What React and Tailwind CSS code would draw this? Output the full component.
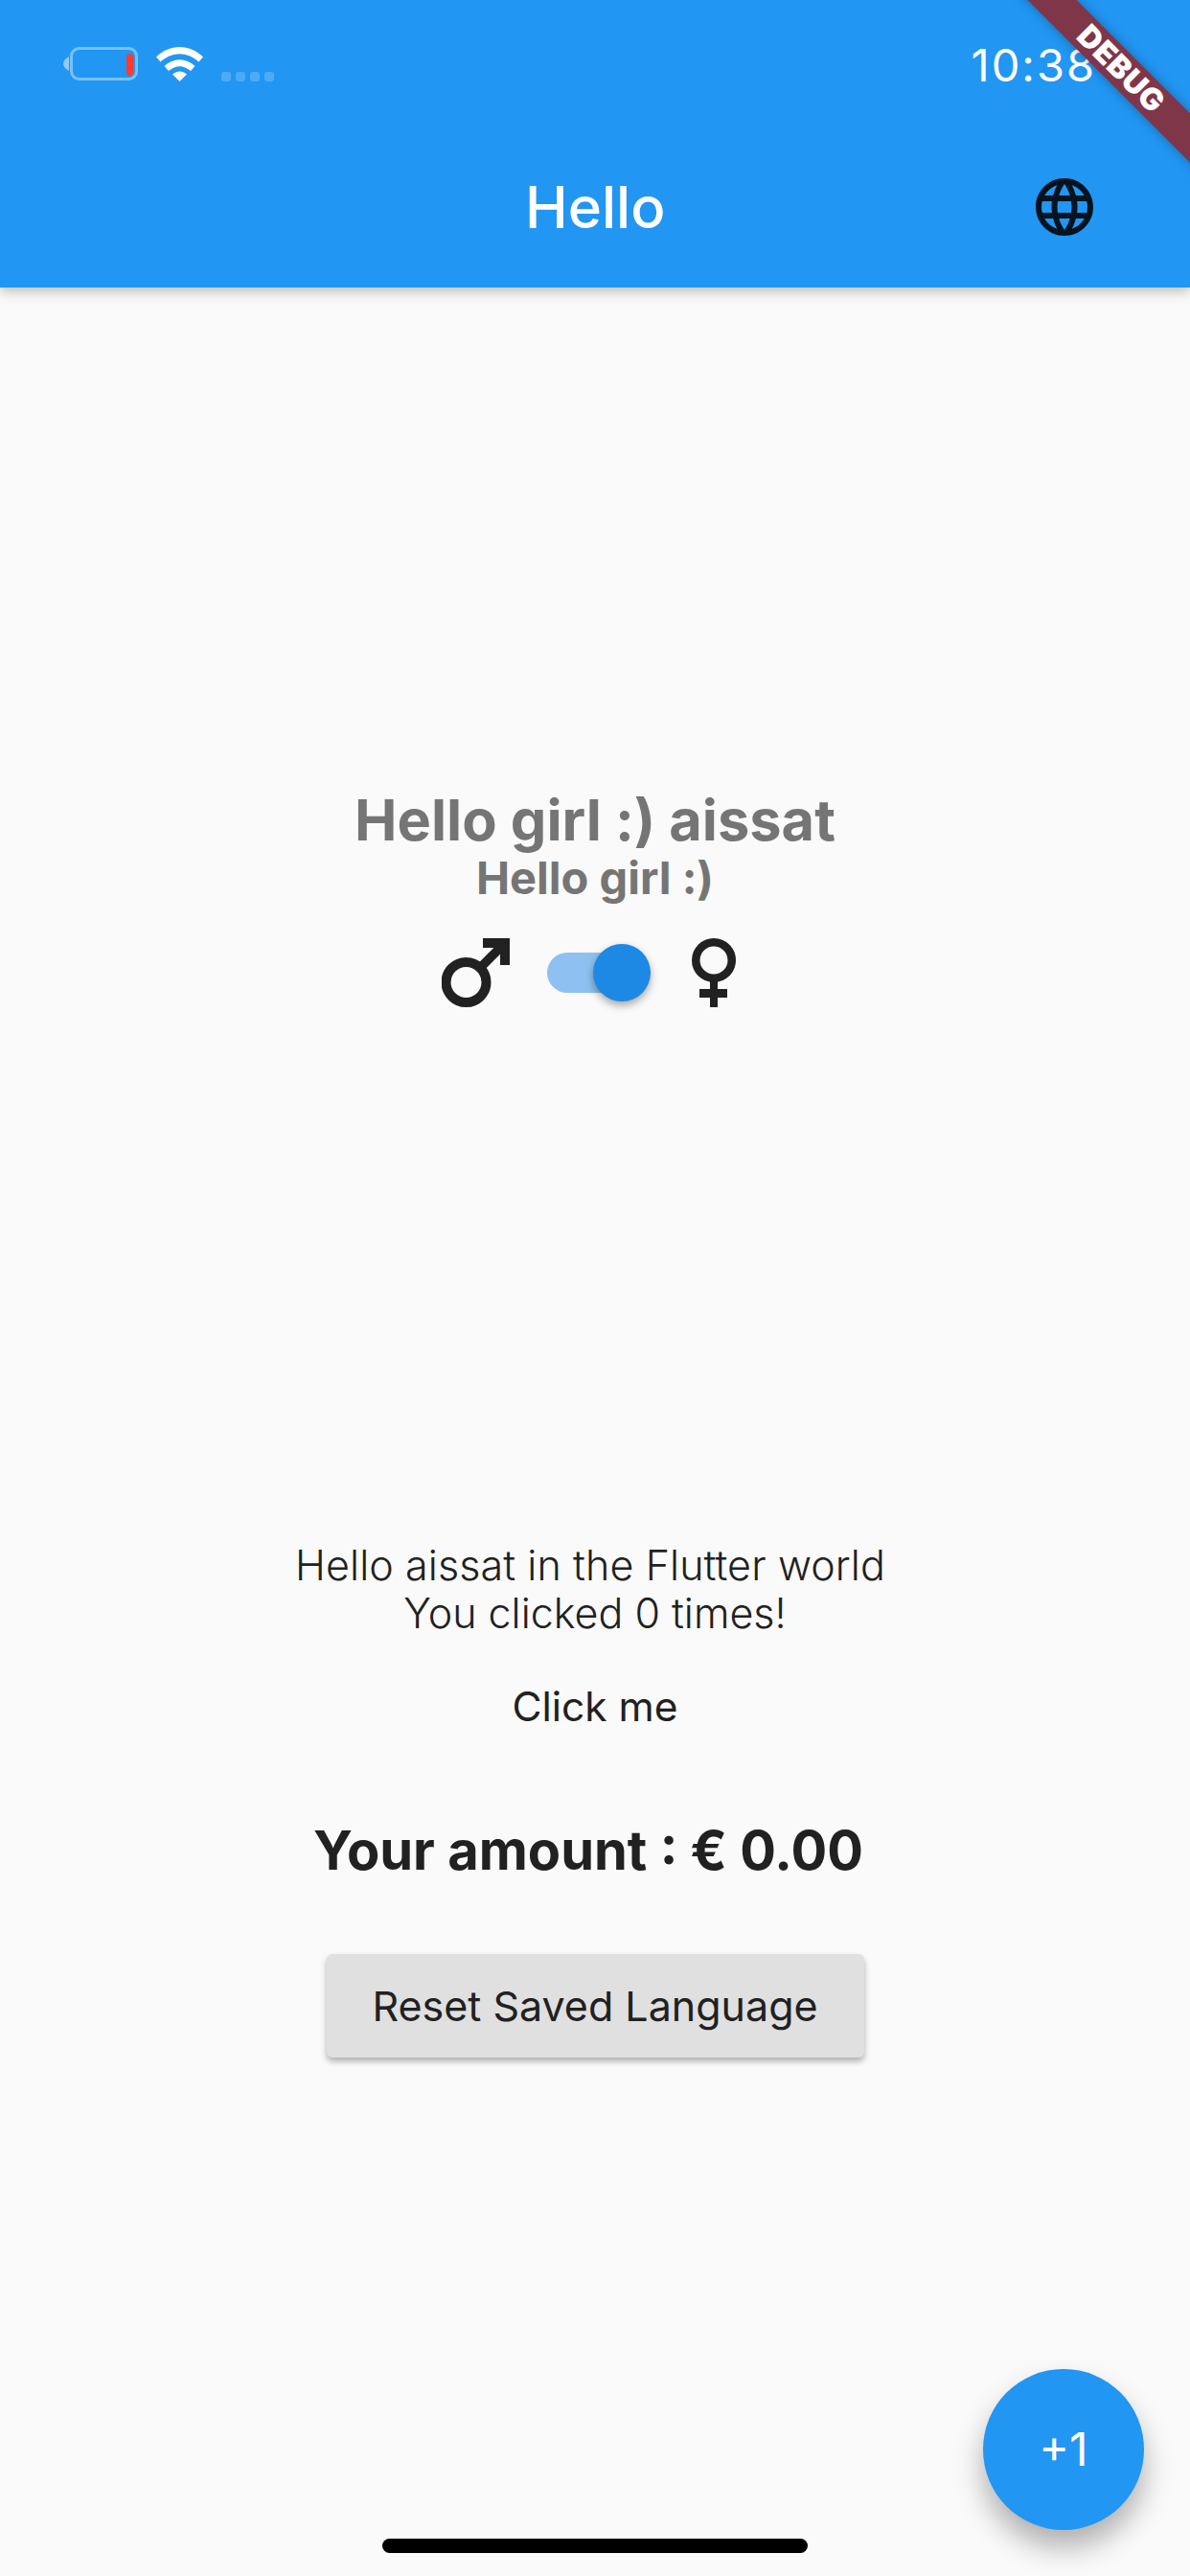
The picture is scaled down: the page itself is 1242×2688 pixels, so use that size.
import { MdLanguage } from 'react-icons/md'

function StatusIcons() {
  return (
    <div className="flex items-start">
      {/* Battery */}
      <svg width="82" height="40" viewBox="0 0 82 40" className="ml-[64px]">
        <path d="M8 11 C4 13 2 16 2 18.5 C2 21 4 24 8 26 Z" fill="#ffffff" fillOpacity="0.5" />
        <rect x="10.5" y="2.5" width="68" height="32" rx="8" fill="none" stroke="#ffffff" strokeOpacity="0.4" strokeWidth="3" />
        <rect x="68" y="8" width="7" height="23" rx="3.5" fill="#ff3b30" />
      </svg>
      {/* Wifi */}
      <svg width="50" height="38" viewBox="0 0 50 38" className="ml-[17px] mt-[1px]">
        <path d="M0 10.5 C14 -3.5 35 -3.5 49 10.5 L44.5 15.5 C32 4.5 17 4.5 4.5 15.5 Z" fill="#ffffff" />
        <path d="M8.5 20 C18 11 31 11 40.5 20 L36 25 C28 18.5 21 18.5 13 25 Z" fill="#ffffff" />
        <path d="M17 28.5 C22 24.5 27 24.5 32 28.5 L24.5 36 Z" fill="#ffffff" />
      </svg>
      <div className="ml-[18px] mt-[27px] flex gap-[5px]">
        <div className="w-[10px] h-[10px] rounded-[3px] bg-white/20"></div>
        <div className="w-[10px] h-[10px] rounded-[3px] bg-white/20"></div>
        <div className="w-[10px] h-[10px] rounded-[3px] bg-white/20"></div>
        <div className="w-[10px] h-[10px] rounded-[3px] bg-white/20"></div>
      </div>
    </div>
  )
}

function MaleIcon() {
  return (
    <svg width="71" height="72" viewBox="0 0 71 72">
      <circle cx="25.5" cy="46" r="21" fill="none" stroke="#212121" strokeWidth="10" />
      <path d="M38 33 L65 6" fill="none" stroke="#212121" strokeWidth="9.5" />
      <path d="M43 0 H71 V28 H61 V10 H43 Z" fill="#212121" />
    </svg>
  )
}

function FemaleIcon() {
  return (
    <svg width="46" height="72" viewBox="0 0 46 72">
      <circle cx="23" cy="23" r="18.75" fill="none" stroke="#212121" strokeWidth="8.5" />
      <rect x="19" y="44" width="8" height="28" fill="#212121" />
      <rect x="8" y="53" width="29" height="9" fill="#212121" />
    </svg>
  )
}

export default function App() {
  return (
    <div className="relative w-[1242px] h-[2688px] overflow-hidden bg-[#fafafa] font-['Inter',sans-serif] text-[#212121]">
      {/* App bar */}
      <header className="h-[300px] bg-[#2196f3] shadow-[0_4px_12px_rgba(0,0,0,0.25)]">
        <div className="flex justify-between items-start pt-[48px] pr-[98px] h-[168px]">
          <StatusIcons />
          <span className="text-[47px] leading-[40px] tracking-[2px] text-white">10:38</span>
        </div>
        <div className="flex items-center justify-between h-[96px] pl-[548px] pr-[95px]">
          <h1 className="text-[60px] leading-[60px] font-medium text-white">Hello</h1>
          <MdLanguage className="w-[72px] h-[72px] text-[#04141f]" />
        </div>
      </header>

      {/* Main */}
      <main className="flex flex-col items-center">
        <p className="mt-[523px] text-[59.5px] leading-[64px] font-bold text-[#757575]">Hello girl :) aissat</p>
        <p className="text-[47px] leading-[58px] font-bold text-[#757575]">Hello girl :)</p>
        <div className="mt-[34px] mr-[13px] flex items-center h-[72px]">
          <MaleIcon />
          <div className="relative ml-[39px] w-[99px] h-[42px] rounded-full bg-[#8ec1f1]">
            <div className="absolute right-[-9px] top-[-9px] w-[60px] h-[60px] rounded-full bg-[#1e88e5] shadow-[0_4px_8px_rgba(0,0,0,0.35)]"></div>
          </div>
          <div className="ml-[52px]">
            <FemaleIcon />
          </div>
        </div>

        <div className="mt-[557px] text-[43px] leading-[50px] font-light text-center">
          <p className="pr-[10px] tracking-[0.1px]">Hello aissat in the Flutter world</p>
          <p>You clicked 0 times!</p>
        </div>
        <p className="mt-[48px] text-[42.5px] leading-[50px]">Click me</p>
        <p className="mt-[92px] mr-[14px] text-[56px] leading-[66px] font-bold">Your amount : € 0.00</p>
        <button className="mt-[75px] w-[561px] h-[108px] rounded-[6px] bg-[#e0e0e0] text-[43px] shadow-[0_4px_6px_rgba(0,0,0,0.3)]">
          Reset Saved Language
        </button>
      </main>

      {/* Debug ribbon */}
      <div className="absolute left-[970px] top-[54px] w-[400px] h-[36px] rotate-45 flex items-center justify-center bg-[#7f3649] shadow-[0_0_12px_rgba(0,0,0,0.3)]">
        <span className="text-[32px] leading-[30px] tracking-[0.5px] font-black text-white">DEBUG</span>
      </div>

      {/* FAB */}
      <button className="absolute left-[1026px] top-[2472px] w-[168px] h-[168px] rounded-full bg-[#2196f3] text-[48px] text-white shadow-[0_18px_30px_rgba(0,0,0,0.3)]">
        +1
      </button>

      {/* Home indicator */}
      <div className="absolute left-[399px] top-[2649px] w-[444px] h-[15px] rounded-full bg-black"></div>
    </div>
  )
}
